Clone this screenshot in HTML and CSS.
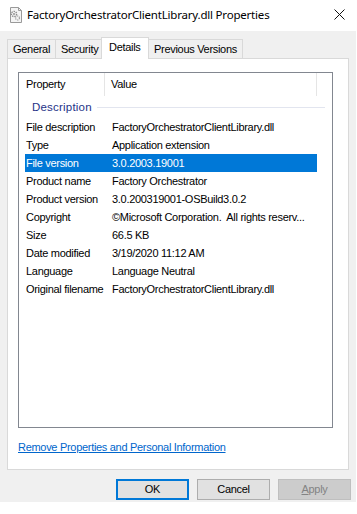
FILE: index.html
```html
<!DOCTYPE html>
<html>
<head>
<meta charset="utf-8">
<link rel="stylesheet" href="styles.css">
</head>
<body>
<div class="window">
  <div class="titlebar">
    <div class="title-left">
      <svg class="file-icon" width="16" height="16" viewBox="0 0 16 16">
        <path d="M2.5 0.5h8l3 3v12h-11z" fill="#f4f4f4" stroke="#9a9a9a"/>
        <path d="M10.5 0.5v3h3" fill="none" stroke="#9a9a9a"/>
        <circle cx="6" cy="7" r="2.6" fill="none" stroke="#8a8a8a" stroke-width="1.4" stroke-dasharray="1.4 0.9"/>
        <circle cx="6" cy="7" r="0.9" fill="#8a8a8a"/>
        <circle cx="9.5" cy="11" r="2" fill="none" stroke="#a0a0a0" stroke-width="1.2" stroke-dasharray="1.2 0.8"/>
      </svg>
      <span class="title">FactoryOrchestratorClientLibrary.dll Properties</span>
    </div>
    <svg class="close" width="11" height="11" viewBox="0 0 11 11">
      <path d="M0.5 0.5l10 10M10.5 0.5l-10 10" stroke="#111" stroke-width="1"/>
    </svg>
  </div>
  <div class="dialog">
    <div class="tabs">
      <div class="tab t-general">General</div>
      <div class="tab t-security">Security</div>
      <div class="tab t-details active">Details</div>
      <div class="tab t-prev">Previous Versions</div>
    </div>
    <div class="panel">
      <div class="listview">
        <div class="header">
          <div class="hcell hprop">Property</div>
          <div class="hcell hval">Value</div>
          <div class="hcell hrest"></div>
        </div>
        <div class="group">
          <span class="group-title">Description</span>
          <span class="group-line"></span>
        </div>
        <div class="rows">
          <div class="row"><span class="k">File description</span><span class="v">FactoryOrchestratorClientLibrary.dll</span></div>
          <div class="row"><span class="k">Type</span><span class="v">Application extension</span></div>
          <div class="row selected"><span class="k">File version</span><span class="v">3.0.2003.19001</span></div>
          <div class="row"><span class="k">Product name</span><span class="v">Factory Orchestrator</span></div>
          <div class="row"><span class="k">Product version</span><span class="v">3.0.200319001-OSBuild3.0.2</span></div>
          <div class="row"><span class="k">Copyright</span><span class="v">©Microsoft Corporation.&nbsp; All rights reserv...</span></div>
          <div class="row"><span class="k">Size</span><span class="v">66.5 KB</span></div>
          <div class="row"><span class="k">Date modified</span><span class="v">3/19/2020 11:12 AM</span></div>
          <div class="row"><span class="k">Language</span><span class="v">Language Neutral</span></div>
          <div class="row"><span class="k">Original filename</span><span class="v">FactoryOrchestratorClientLibrary.dll</span></div>
        </div>
      </div>
      <a class="link" href="#">Remove Properties and Personal Information</a>
    </div>
    <div class="buttons">
      <div class="btn default">OK</div>
      <div class="btn">Cancel</div>
      <div class="btn disabled"><u>A</u>pply</div>
    </div>
  </div>
</div>
</body>
</html>
```
FILE: styles.css
```css
html, body {
  margin: 0;
  padding: 0;
  background: #ffffff;
}
body {
  width: 357px;
  height: 514px;
  overflow: hidden;
  font-family: "Liberation Sans", Arial, sans-serif;
  font-size: 11px;
  letter-spacing: -0.3px;
  color: #000;
}
.window {
  width: 357px;
}
.titlebar {
  height: 31px;
  display: flex;
  align-items: center;
  justify-content: space-between;
  padding: 0 12px 0 8px;
  box-sizing: border-box;
}
.title-left {
  display: flex;
  align-items: center;
  gap: 3px;
  margin-top: -2px;
}
.file-icon {
  display: block;
}
.title {
  font-family: "Noto Sans", "Open Sans", sans-serif;
  font-size: 11.5px;
  letter-spacing: -0.2px;
  color: #000;
}
.close {
  display: block;
  margin-top: -2px;
}
.dialog {
  width: 356px;
  background: #f0f0f0;
  height: 471px;
  display: flex;
  flex-direction: column;
}
.tabs {
  display: flex;
  align-items: flex-end;
  padding: 8px 0 0 7px;
  height: 27px;
  box-sizing: border-box;
  position: relative;
  z-index: 1;
}
.tab {
  height: 19px;
  box-sizing: border-box;
  border: 1px solid #d9d9d9;
  border-bottom: none;
  background: #f0f0f0;
  padding: 0 0 0 5px;
  line-height: 18px;
  font-size: 11px;
  margin-right: -1px;
  white-space: nowrap;
}
.t-general { width: 49px; }
.t-security { width: 47px; }
.t-details { width: 48px; }
.t-prev { width: 95px; }
.tab.active {
  background: #ffffff;
  height: 22px;
  margin-bottom: -1px;
  line-height: 18px;
  padding-left: 7px;
  position: relative;
  z-index: 2;
}
.panel {
  margin: 0 7px;
  height: 412px;
  box-sizing: border-box;
  background: #ffffff;
  border: 1px solid #d9d9d9;
  padding: 13px 0 0 10px;
  display: flex;
  flex-direction: column;
}
.listview {
  width: 315px;
  height: 356px;
  box-sizing: border-box;
  border: 1px solid #828790;
  background: #fff;
}
.header {
  display: flex;
  height: 24px;
}
.hcell {
  line-height: 23px;
  box-sizing: border-box;
  height: 23px;
}
.hprop {
  width: 86px;
  padding-left: 7px;
  border-right: 1px solid #e5e5e5;
}
.hval {
  width: 212px;
  padding-left: 6px;
  border-right: 1px solid #e5e5e5;
}
.group {
  display: flex;
  align-items: center;
  height: 20px;
  padding-left: 13px;
}
.group-title {
  color: #1e3287;
  font-size: 11.5px;
  letter-spacing: 0.2px;
}
.group-line {
  flex: none;
  width: 228px;
  height: 1px;
  background: #e2e5ef;
  margin-left: 5px;
}
.rows {
  padding-top: 1px;
}
.row {
  display: flex;
  height: 18px;
  line-height: 18px;
  margin-left: 6px;
  width: 292px;
  white-space: nowrap;
}
.row .k {
  width: 86px;
  padding-left: 1px;
  flex: none;
}
.row .v {
  padding-left: 0;
}
.row.selected {
  background: #0078d7;
  color: #ffffff;
}
.link {
  margin-top: 13px;
  color: #0066cc;
  text-decoration: underline;
  font-size: 11px;
  align-self: flex-start;
}
.buttons {
  display: flex;
  justify-content: flex-end;
  gap: 8px;
  padding: 9px 5px 0 0;
  margin-left: 7px;
}
.btn {
  width: 73px;
  height: 21px;
  box-sizing: border-box;
  border: 1px solid #adadad;
  background: #e1e1e1;
  text-align: center;
  line-height: 19px;
  font-size: 11px;
}
.btn.default {
  border: 2px solid #0078d7;
  line-height: 17px;
}
.btn.disabled {
  background: #cccccc;
  border-color: #bfbfbf;
  color: #838383;
}
.btn u {
  text-decoration: underline;
}
```
